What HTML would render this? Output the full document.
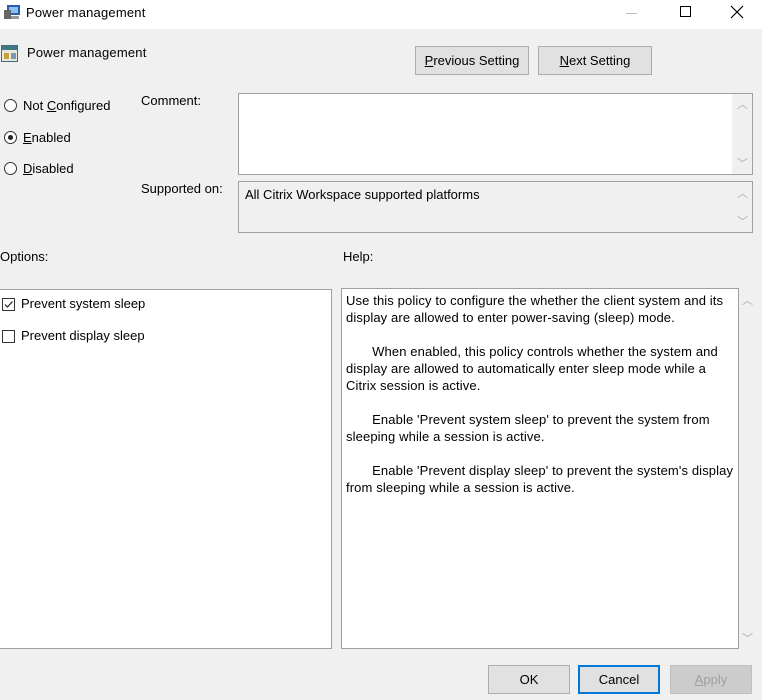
<!DOCTYPE html>
<html><head><style>
*{margin:0;padding:0;box-sizing:border-box}
body{width:762px;height:700px;background:#f0f0f0;font-family:"Liberation Sans",sans-serif;font-size:13px;color:#000;position:relative;overflow:hidden}
.a{position:absolute;white-space:nowrap}
.title{left:0;top:0;width:762px;height:29px;background:#fff}
.btn{position:absolute;background:#e1e1e1;border:1px solid #adadad;text-align:center;font-size:13px}
.box{position:absolute;background:#fff;border:1px solid #a0a0a0}
.radio{position:absolute;width:13px;height:13px;border:1px solid #333;border-radius:50%;background:#fff}
.chk{position:absolute;width:13px;height:13px;border:1px solid #333;background:#fff}
.sb{position:absolute;color:#aaa;font-size:11px}
u{text-decoration:underline}
</style></head><body>
<div class="a title"></div>
<svg class="a" style="left:3px;top:4px" width="18" height="16"><rect x="4" y="1" width="13" height="10" fill="#2a5db0"/><rect x="6" y="3" width="9" height="6" fill="#8ec0f0"/><rect x="1" y="6" width="7" height="9" fill="#666"/><rect x="8" y="12" width="8" height="3" fill="#999"/></svg>
<div class="a" style="left:26px;top:5px;font-size:13px;letter-spacing:0.2px">Power management</div>
<div class="a" style="left:626px;top:13px;width:11px;height:1px;background:#bbb"></div>
<div class="a" style="left:680px;top:6px;width:11px;height:11px;border:1px solid #000"></div>
<svg class="a" style="left:730px;top:5px" width="14" height="14"><path d="M1 1L13 13M13 1L1 13" stroke="#000" stroke-width="1.2"/></svg>

<svg class="a" style="left:1px;top:45px" width="18" height="18"><rect x="0.5" y="0.5" width="16" height="16" fill="#e8e8d8" stroke="#4a6a7a"/><rect x="1" y="1" width="15" height="4" fill="#3f7a8a"/><rect x="3" y="8" width="5" height="6" fill="#c8a040"/><rect x="10" y="8" width="5" height="6" fill="#7a9ab0"/></svg>
<div class="a" style="left:27px;top:45px;letter-spacing:0.2px">Power management</div>

<div class="btn" style="left:415px;top:46px;width:114px;height:29px;line-height:27px"><u>P</u>revious Setting</div>
<div class="btn" style="left:538px;top:46px;width:114px;height:29px;line-height:27px"><u>N</u>ext Setting</div>

<div class="radio" style="left:4px;top:99px"></div>
<div class="a" style="left:23px;top:98px">Not <u>C</u>onfigured</div>
<div class="radio" style="left:4px;top:131px"><div style="position:absolute;left:3px;top:3px;width:5px;height:5px;border-radius:50%;background:#222"></div></div>
<div class="a" style="left:23px;top:130px"><u>E</u>nabled</div>
<div class="radio" style="left:4px;top:162px"></div>
<div class="a" style="left:23px;top:161px"><u>D</u>isabled</div>

<div class="a" style="left:141px;top:93px">Comment:</div>
<div class="box" style="left:238px;top:93px;width:515px;height:82px"><div style="position:absolute;right:0;top:0;width:20px;height:100%;background:#f0f0f0"></div></div>
<div class="sb" style="left:737px;top:96px">︿</div>
<div class="sb" style="left:737px;top:155px">﹀</div>

<div class="a" style="left:141px;top:181px">Supported on:</div>
<div class="box" style="left:238px;top:181px;width:515px;height:52px;background:#f0f0f0"></div>
<div class="a" style="left:245px;top:187px">All Citrix Workspace supported platforms</div>
<div class="sb" style="left:737px;top:185px">︿</div>
<div class="sb" style="left:737px;top:213px">﹀</div>

<div class="a" style="left:0;top:249px">Options:</div>
<div class="a" style="left:343px;top:249px">Help:</div>

<div class="box" style="left:-2px;top:289px;width:334px;height:360px"></div>
<div class="chk" style="left:2px;top:298px"><svg width="11" height="11" style="position:absolute;left:0;top:0"><path d="M2 5.5L4.5 8L9.5 2.5" stroke="#222" stroke-width="1.2" fill="none"/></svg></div>
<div class="a" style="left:21px;top:296px">Prevent system sleep</div>
<div class="chk" style="left:2px;top:330px"></div>
<div class="a" style="left:21px;top:328px">Prevent display sleep</div>

<div class="box" style="left:341px;top:288px;width:398px;height:361px"></div>
<div class="a" style="left:346px;top:292px;line-height:17px;letter-spacing:0.12px">Use this policy to configure the whether the client system and its<br>display are allowed to enter power-saving (sleep) mode.<br><br>&nbsp; &nbsp; &nbsp; &nbsp;When enabled, this policy controls whether the system and<br>display are allowed to automatically enter sleep mode while a<br>Citrix session is active.<br><br>&nbsp; &nbsp; &nbsp; &nbsp;Enable 'Prevent system sleep' to prevent the system from<br>sleeping while a session is active.<br><br>&nbsp; &nbsp; &nbsp; &nbsp;Enable 'Prevent display sleep' to prevent the system's display<br>from sleeping while a session is active.</div>
<div class="sb" style="left:742px;top:292px">︿</div>
<div class="sb" style="left:742px;top:630px">﹀</div>

<div class="btn" style="left:488px;top:665px;width:82px;height:29px;line-height:27px">OK</div>
<div class="btn" style="left:578px;top:665px;width:82px;height:29px;line-height:25px;border:2px solid #0078d7">Cancel</div>
<div class="btn" style="left:670px;top:665px;width:82px;height:29px;line-height:27px;background:#ccc;border-color:#bfbfbf;color:#a0a0a0"><u>A</u>pply</div>
</body></html>
